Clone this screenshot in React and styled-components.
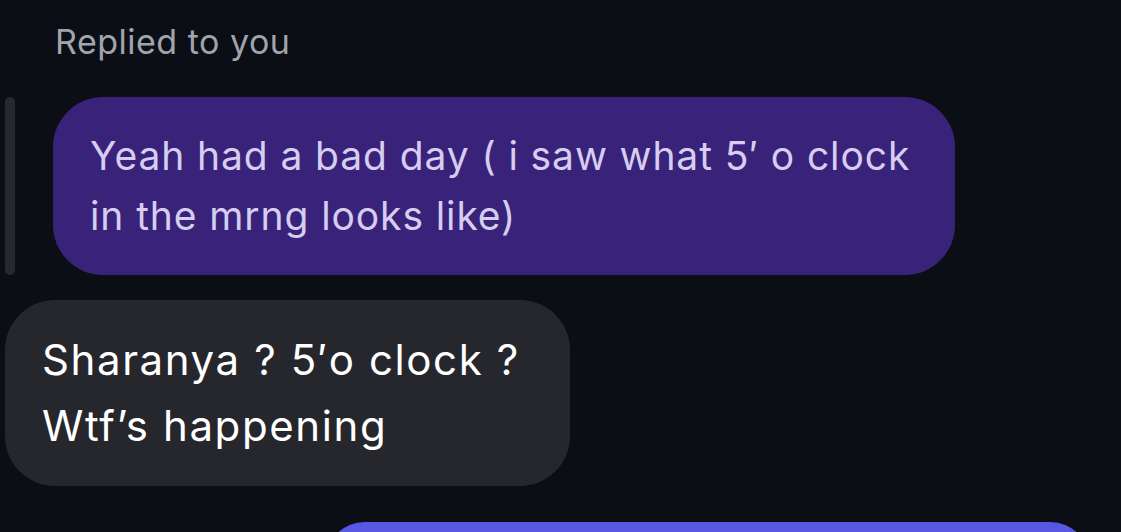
import React from 'react';
import styled, { createGlobalStyle } from 'styled-components';

const GlobalStyle = createGlobalStyle`
  html, body {
    margin: 0;
    padding: 0;
    background: #0b0e14;
    overflow: hidden;
  }
  body {
    font-family: Inter, "Noto Sans", sans-serif;
    -webkit-font-smoothing: antialiased;
  }
`;

const Thread = styled.div`
  width: 1121px;
  height: 532px;
  overflow: hidden;
  display: flex;
  flex-direction: column;
  padding: 22px 0 0 5px;
  box-sizing: border-box;
`;

const ReplyLabel = styled.div`
  padding-left: 50px;
  font-size: 34px;
  line-height: 40px;
  letter-spacing: 0.5px;
  color: #a0a4ad;
  margin-bottom: 35px;
`;

const QuoteRow = styled.div`
  display: flex;
  align-items: stretch;
  gap: 38px;
`;

const QuoteBar = styled.div`
  width: 10px;
  border-radius: 5px;
  background: #26292f;
`;

const Bubble = styled.div`
  box-sizing: border-box;
  width: ${(p) => p.$width}px;
  padding: ${(p) => p.$padding};
  border-radius: 50px;
  background: ${(p) => p.$bg};
  color: ${(p) => p.$color};
  font-size: ${(p) => p.$size}px;
  line-height: ${(p) => p.$lh}px;
  letter-spacing: ${(p) => p.$track}px;
  margin-top: ${(p) => p.$mt || 0}px;
  flex-shrink: 0;
`;

const OutgoingStub = styled.div`
  margin-top: 36px;
  margin-left: 320px;
  width: 765px;
  height: 80px;
  flex-shrink: 0;
  border-radius: 40px;
  background: #5857e3;
`;

export default function App() {
  return (
    <>
      <GlobalStyle />
      <Thread>
        <ReplyLabel>Replied to you</ReplyLabel>
        <QuoteRow>
          <QuoteBar />
          <Bubble
            $width={902}
            $padding="29px 40px 29px 37px"
            $bg="#39237a"
            $color="#d6cdf0"
            $size={39}
            $lh={60}
            $track={0.9}
          >
            Yeah had a bad day ( i saw what 5′ o clock in the mrng looks like)
          </Bubble>
        </QuoteRow>
        <Bubble
          $width={565}
          $padding="27px 30px 27px 37px"
          $bg="#25272d"
          $color="#ffffff"
          $size={42}
          $lh={66}
          $track={1.6}
          $mt={25}
        >
          Sharanya ? 5′o clock ? Wtf’s happening
        </Bubble>
        <OutgoingStub />
      </Thread>
    </>
  );
}
